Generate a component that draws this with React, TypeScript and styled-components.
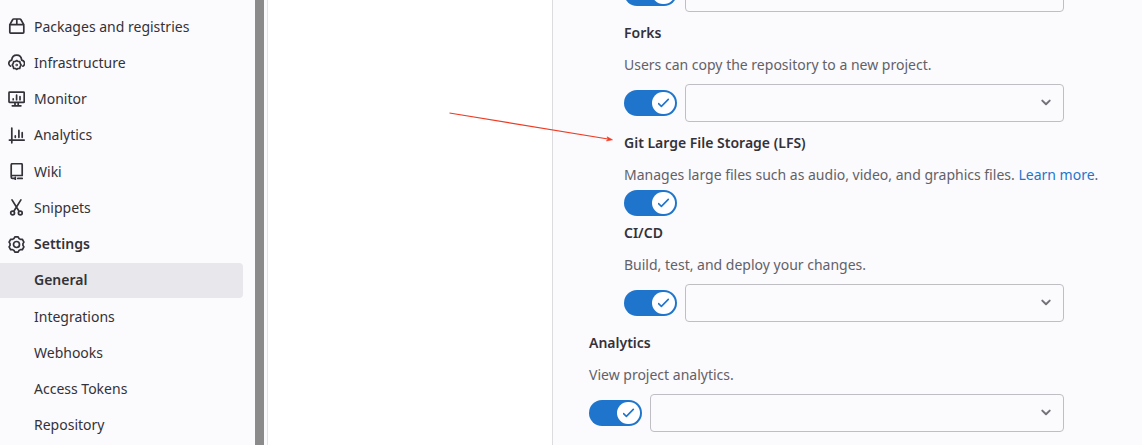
import React from "react";
import styled, { createGlobalStyle } from "styled-components";

const GlobalStyle = createGlobalStyle`
  *, *::before, *::after { box-sizing: border-box; }
  body {
    margin: 0;
    background: #fff;
    color: #333238;
    font-family: "Segoe UI", "Noto Sans", sans-serif;
    font-size: 14px;
    line-height: 22px;
  }
`;

const Page = styled.div`
  position: relative;
  display: flex;
  height: 100vh;
  overflow: hidden;
`;

const Sidebar = styled.nav`
  flex: 0 0 268px;
  display: flex;
  background: #fbfafd;
  border-right: 1px solid #e4e3e8;
`;

const ScrollThumb = styled.div`
  width: 9px;
  margin-right: 3px;
  background: #8b8b8b;
`;

const NavList = styled.ul`
  flex: 1;
  display: flex;
  flex-direction: column;
  justify-content: space-between;
  margin: 0;
  padding: 9px 12px 2px 0;
  list-style: none;
`;

const NavLink = styled.a<{ $active?: boolean; $strong?: boolean }>`
  display: grid;
  grid-template-columns: 17px 1fr;
  column-gap: 9px;
  align-items: center;
  height: 35px;
  padding-left: 8px;
  border-radius: 0 4px 4px 0;
  background: ${(p) => (p.$active ? "#e8e7eb" : "transparent")};
  color: #333238;
  font-weight: ${(p) => (p.$strong ? 600 : 400)};
  text-decoration: none;
`;

const NavText = styled.span`
  grid-column: 2;
`;

const Glyph = styled.svg`
  display: block;
  width: 17px;
  height: 17px;
  fill: none;
  stroke: #333238;
  stroke-width: 1.7;
  stroke-linecap: round;
  stroke-linejoin: round;
`;

const Main = styled.main`
  flex: 1;
  display: flex;
  justify-content: flex-end;
  min-width: 0;
`;

const Panel = styled.section`
  flex: 0 1 590px;
  overflow: hidden;
  background: #fbfafd;
  border-left: 1px solid #dcdcde;
`;

const SettingsForm = styled.form`
  margin-top: -26px;
  padding-left: 36px;
`;

const Setting = styled.div<{ $nested?: boolean; $compact?: boolean }>`
  display: flex;
  flex-direction: column;
  padding-left: ${(p) => (p.$nested ? 35 : 0)}px;
  padding-bottom: ${(p) => (p.$compact ? 6 : 10)}px;
`;

const Title = styled.h3`
  margin: 0 0 10px;
  font-size: 14px;
  font-weight: 600;
  line-height: 22px;
`;

const Description = styled.p<{ $tight?: boolean }>`
  margin: 0 0 ${(p) => (p.$tight ? 4 : 8)}px;
  color: #626168;
  white-space: nowrap;
`;

const TextLink = styled.a`
  color: #1f75cb;
  text-decoration: none;
`;

const Controls = styled.div`
  display: flex;
  align-items: center;
  gap: 8px;
  padding-right: 78px;
`;

const ToggleButton = styled.button`
  flex: none;
  display: flex;
  align-items: center;
  justify-content: flex-end;
  width: 53px;
  height: 26px;
  padding: 2px;
  border: 0;
  border-radius: 13px;
  background: #1f75cb;
  cursor: pointer;
`;

const Knob = styled.span`
  display: flex;
  align-items: center;
  justify-content: center;
  width: 23px;
  height: 22px;
  border-radius: 11px;
  background: #fff;
`;

const CheckMark = styled.svg`
  width: 12px;
  height: 12px;
  fill: none;
  stroke: #1f75cb;
  stroke-width: 1.6;
  stroke-linecap: round;
  stroke-linejoin: round;
`;

const SelectBox = styled.div`
  flex: 1;
  display: grid;
  align-items: center;
`;

const Select = styled.select`
  grid-area: 1 / 1;
  width: 100%;
  height: 38px;
  padding: 0 32px 0 12px;
  appearance: none;
  border: 1px solid #bfbfc3;
  border-radius: 4px;
  background: transparent;
  color: #333238;
  font: inherit;
`;

const Chevron = styled.svg`
  grid-area: 1 / 1;
  justify-self: end;
  width: 12px;
  height: 12px;
  margin-right: 12px;
  fill: none;
  stroke: #737278;
  stroke-width: 2;
  stroke-linecap: round;
  stroke-linejoin: round;
  pointer-events: none;
`;

const Arrow = styled.svg`
  position: absolute;
  top: 108px;
  left: 448px;
  width: 168px;
  height: 38px;
  pointer-events: none;
`;

const gearOutline = (() => {
  const points: string[] = [];
  const at = (deg: number, r: number) => {
    const a = (deg * Math.PI) / 180;
    return `${(8.5 + r * Math.cos(a)).toFixed(2)} ${(8.5 + r * Math.sin(a)).toFixed(2)}`;
  };
  for (let i = 0; i < 6; i++) {
    const c = -90 + i * 60;
    points.push(at(c - 12, 7.8), at(c + 12, 7.8), at(c + 22, 6.5), at(c + 38, 6.5));
  }
  return `M${points.join("L")}Z`;
})();

const icons: Record<string, React.ReactNode> = {
  package: <path d="M1.8 6.6h14v7.7q0 .8-.8.8H2.6q-.8 0-.8-.8zL4.8 1.5q.3-.5.9-.5h6.2q.6 0 .9.5l3 5.1M8.8 1v5.6" />,
  infrastructure: (
    <>
      <path d="M2.6 12.2C-.1 10.8.3 6.9 3.7 6.2 4.3-.5 13.1-.5 13.7 6.2c3.4.7 3.8 4.6 1.1 6" />
      <path d="m8.700 6.5 1.300.9 1.700.1.500 1.900.9 1.600-.9 1.600-.5 1.800-1.700.1-1.300.9-1.300-.9-1.700-.1-.5-1.800-.9-1.600.9-1.600.5-1.900 1.700-.1z" />
      <circle cx="8.7" cy="11" r=".4" />
    </>
  ),
  monitor: <path d="M1.600 1.100h14q.6 0 .6.600v9.100q0 .6-.6.600h-14q-.6 0-.6-.6V1.700q0-.6.6-.6zM7 11.600v3M10.200 11.600v3M4.300 14.800h8.600M5.200 7.900v.8M8.600 4.200v4.500M12 5.700v3" />,
  analytics: <path d="M3.800 1v14.800M1.400 13.100h14.800M7.300 8.900v1.400M10.900 3.400v6.900M14.200 5.700v4.600" />,
  wiki: <path d="M3.200 14V2q0-1.400 1.400-1.400H13q1.200 0 1.200 1.200v10.700H4.600q-1.400 0-1.400 1.400t1.400 1.500h2.200M9.800 15.400h4.400M7.300 14.400v2.100" />,
  snippets: (
    <>
      <path d="M4 .9 10.900 12M12.900.9 6 12" />
      <circle cx="4.6" cy="14" r="1.9" />
      <circle cx="12.3" cy="14" r="1.9" />
    </>
  ),
  settings: (
    <>
      <path d={gearOutline} />
      <circle cx="8.5" cy="8.5" r="3" />
    </>
  ),
};

const navItems = [
  { label: "Packages and registries", icon: "package" },
  { label: "Infrastructure", icon: "infrastructure" },
  { label: "Monitor", icon: "monitor" },
  { label: "Analytics", icon: "analytics" },
  { label: "Wiki", icon: "wiki" },
  { label: "Snippets", icon: "snippets" },
  { label: "Settings", icon: "settings", strong: true },
  { label: "General", active: true, strong: true },
  { label: "Integrations" },
  { label: "Webhooks" },
  { label: "Access Tokens" },
  { label: "Repository" },
];

function Toggle({ label }: { label: string }) {
  const [on, setOn] = React.useState(true);
  return (
    <ToggleButton type="button" role="switch" aria-checked={on} aria-label={label} onClick={() => setOn(!on)}>
      <Knob>
        <CheckMark viewBox="0 0 12 12" aria-hidden="true">
          <path d="M.5 6.600 3.400 9.400 10.300 2.400" />
        </CheckMark>
      </Knob>
    </ToggleButton>
  );
}

function AccessSelect({ label }: { label: string }) {
  return (
    <SelectBox>
      <Select aria-label={label} />
      <Chevron viewBox="0 0 12 12" aria-hidden="true">
        <path d="M2.300 3.600 6 7.200l3.700-3.600" />
      </Chevron>
    </SelectBox>
  );
}

export default function App() {
  return (
    <Page>
      <GlobalStyle />
      <Sidebar aria-label="Project navigation">
        <NavList>
          {navItems.map((item) => (
            <li key={item.label}>
              <NavLink href="#" $active={item.active} $strong={item.strong}>
                {item.icon && (
                  <Glyph viewBox="0 0 17 17" aria-hidden="true">
                    {icons[item.icon]}
                  </Glyph>
                )}
                <NavText>{item.label}</NavText>
              </NavLink>
            </li>
          ))}
        </NavList>
        <ScrollThumb />
      </Sidebar>
      <Main>
        <Panel>
          <SettingsForm>
            <Setting $nested>
              <Controls>
                <Toggle label="Merge requests" />
                <AccessSelect label="Merge requests access" />
              </Controls>
            </Setting>
            <Setting $nested>
              <Title>Forks</Title>
              <Description>Users can copy the repository to a new project.</Description>
              <Controls>
                <Toggle label="Forks" />
                <AccessSelect label="Forks access" />
              </Controls>
            </Setting>
            <Setting $nested $compact>
              <Title>Git Large File Storage (LFS)</Title>
              <Description $tight>
                Manages large files such as audio, video, and graphics files.{" "}
                <TextLink href="#">Learn more</TextLink>.
              </Description>
              <Controls>
                <Toggle label="Git Large File Storage (LFS)" />
              </Controls>
            </Setting>
            <Setting $nested>
              <Title>CI/CD</Title>
              <Description>Build, test, and deploy your changes.</Description>
              <Controls>
                <Toggle label="CI/CD" />
                <AccessSelect label="CI/CD access" />
              </Controls>
            </Setting>
            <Setting>
              <Title>Analytics</Title>
              <Description>View project analytics.</Description>
              <Controls>
                <Toggle label="Analytics" />
                <AccessSelect label="Analytics access" />
              </Controls>
            </Setting>
          </SettingsForm>
        </Panel>
      </Main>
      <Arrow viewBox="0 0 168 38" aria-hidden="true">
        <path d="M1.500 5 160 31" fill="none" stroke="#ee3b24" strokeWidth="1.1" />
        <path d="M164.500 31.800 159 28.800 160.200 31 158.400 33z" fill="#ee3b24" stroke="#ee3b24" strokeWidth=".6" />
      </Arrow>
    </Page>
  );
}
